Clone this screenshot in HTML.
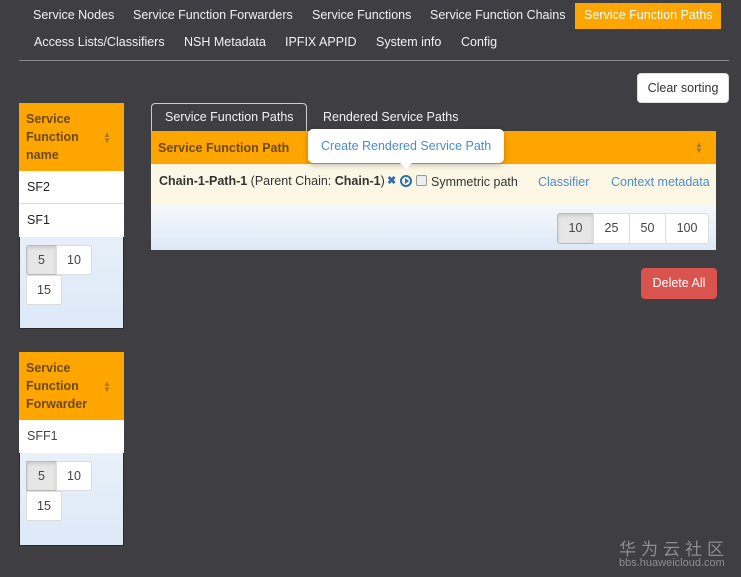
<!DOCTYPE html>
<html><head><meta charset="utf-8"><style>
*{box-sizing:border-box;margin:0;padding:0}
body{width:741px;height:577px;background:#3f3e43;font-family:"Liberation Sans",sans-serif;font-size:12.5px;color:#333;position:relative;overflow:hidden}
.a{position:absolute;white-space:nowrap}
.nav{color:#f2f2f2;font-size:12.5px}
.or{background:#ffa500}
.btn{position:absolute;background:#fff;border:1px solid #ddd;text-align:center;color:#444;font-size:12.5px}
.act{background:#e6e6e6;border-color:#bbb;box-shadow:inset 0 2px 3px rgba(0,0,0,.12)}
.hd{font-weight:bold;color:#6b4a14;line-height:18px}
.sort{position:absolute;color:#a8772a;font-size:8px;line-height:6px}
.blue{background:linear-gradient(#f5f8fd,#dde9f7)}
</style></head><body>
<div class="a nav" style="left:33px;top:8px">Service Nodes</div>
<div class="a nav" style="left:133px;top:8px">Service Function Forwarders</div>
<div class="a nav" style="left:312px;top:8px">Service Functions</div>
<div class="a nav" style="left:430px;top:8px">Service Function Chains</div>
<div class="a or" style="left:575px;top:3px;width:146px;height:26px"></div>
<div class="a nav" style="left:584px;top:8px;color:#fff">Service Function Paths</div>
<div class="a nav" style="left:34px;top:35px">Access Lists/Classifiers</div>
<div class="a nav" style="left:184px;top:35px">NSH Metadata</div>
<div class="a nav" style="left:285px;top:35px">IPFIX APPID</div>
<div class="a nav" style="left:376px;top:35px">System info</div>
<div class="a nav" style="left:461px;top:35px">Config</div>
<div class="a" style="left:19px;top:60px;width:710px;height:1px;background:#8a8a8e"></div>

<div class="btn" style="left:637px;top:73px;width:92px;height:30px;line-height:28px;border-radius:4px;color:#333">Clear sorting</div>

<div class="a blue" style="left:19px;top:103px;width:105px;height:226px;border:1px solid #2a2a2e"></div>
<div class="a or" style="left:19px;top:103px;width:105px;height:68px"></div>
<div class="a hd" style="left:26px;top:110px">Service<br>Function<br>name</div>
<div class="sort" style="left:103px;top:132px">▲<br>▼</div>
<div class="a" style="left:19px;top:171px;width:105px;height:33px;background:#fff;border-bottom:1px solid #ddd"></div>
<div class="a" style="left:27px;top:180px;color:#222">SF2</div>
<div class="a" style="left:19px;top:204px;width:105px;height:33px;background:#fff"></div>
<div class="a" style="left:27px;top:213px;color:#222">SF1</div>
<div class="btn act" style="left:26px;top:245px;width:31px;height:30px;line-height:28px;border-radius:3px 0 0 3px">5</div>
<div class="btn" style="left:56px;top:245px;width:36px;height:30px;line-height:28px">10</div>
<div class="btn" style="left:26px;top:275px;width:36px;height:30px;line-height:28px">15</div>

<div class="a blue" style="left:19px;top:352px;width:105px;height:194px;border:1px solid #2a2a2e"></div>
<div class="a or" style="left:19px;top:352px;width:105px;height:68px"></div>
<div class="a hd" style="left:26px;top:359px">Service<br>Function<br>Forwarder</div>
<div class="sort" style="left:103px;top:381px">▲<br>▼</div>
<div class="a" style="left:19px;top:420px;width:105px;height:33px;background:#fff"></div>
<div class="a" style="left:27px;top:429px;color:#444">SFF1</div>
<div class="btn act" style="left:26px;top:461px;width:31px;height:30px;line-height:28px">5</div>
<div class="btn" style="left:56px;top:461px;width:36px;height:30px;line-height:28px">10</div>
<div class="btn" style="left:26px;top:491px;width:36px;height:30px;line-height:28px">15</div>

<div class="a" style="left:151px;top:103px;width:156px;height:30px;border:1px solid #ccc;border-bottom:none;border-radius:4px 4px 0 0;background:#3f3e43"></div>
<div class="a" style="left:165px;top:110px;color:#f2f2f2">Service Function Paths</div>
<div class="a" style="left:323px;top:110px;color:#f2f2f2">Rendered Service Paths</div>
<div class="a or" style="left:151px;top:131px;width:565px;height:33px"></div>
<div class="a hd" style="left:158px;top:139px;font-size:12.5px">Service Function Path</div>
<div class="sort" style="left:695px;top:142px">▲<br>▼</div>
<div class="a" style="left:151px;top:164px;width:565px;height:41px;background:#fcf7e5"></div>
<div class="a" style="left:159px;top:174px;color:#333;font-size:12.5px"><b>Chain-1-Path-1</b> (Parent Chain: <b>Chain-1</b>)</div>
<div class="a" style="left:387px;top:174px;color:#2c6fb3;font-weight:bold;font-size:11px">✖</div>
<div class="a" style="left:400px;top:175px;width:12px;height:12px;border:2px solid #2c6fb3;border-radius:50%"></div>
<div class="a" style="left:405px;top:178px;width:0;height:0;border-left:4px solid #2c6fb3;border-top:3px solid transparent;border-bottom:3px solid transparent"></div>
<div class="a" style="left:416px;top:175px;width:11px;height:11px;border:1px solid #999;border-radius:2px;background:#eee"></div>
<div class="a" style="left:431px;top:175px;color:#333">Symmetric path</div>
<div class="a" style="left:538px;top:175px;color:#4a8ccc">Classifier</div>
<div class="a" style="left:611px;top:175px;color:#4a8ccc">Context metadata</div>
<div class="a blue" style="left:151px;top:205px;width:565px;height:45px"></div>
<div class="btn act" style="left:557px;top:213px;width:37px;height:31px;line-height:29px;border-radius:3px 0 0 3px">10</div>
<div class="btn" style="left:593px;top:213px;width:37px;height:31px;line-height:29px">25</div>
<div class="btn" style="left:629px;top:213px;width:37px;height:31px;line-height:29px">50</div>
<div class="btn" style="left:665px;top:213px;width:44px;height:31px;line-height:29px;border-radius:0 3px 3px 0">100</div>

<div class="a" style="left:308px;top:129px;width:196px;height:34px;background:#fff;border-radius:5px;box-shadow:0 2px 6px rgba(0,0,0,.25)"></div>
<div class="a" style="left:399px;top:162px;width:0;height:0;border-left:7px solid transparent;border-right:7px solid transparent;border-top:7px solid #fff"></div>
<div class="a" style="left:321px;top:139px;color:#4a8ccc">Create Rendered Service Path</div>

<div class="a" style="left:641px;top:268px;width:76px;height:31px;background:#d9534f;border-radius:4px;color:#fff;text-align:center;line-height:31px">Delete All</div>

<div class="a" style="left:619px;top:535px;color:#8d8d92;font-size:17px;letter-spacing:5px;font-family:'Noto Sans CJK SC',sans-serif">华为云社区</div>
<div class="a" style="left:619px;top:557px;color:#8d8d92;font-size:11px">bbs.huaweicloud.com</div>
</body></html>
